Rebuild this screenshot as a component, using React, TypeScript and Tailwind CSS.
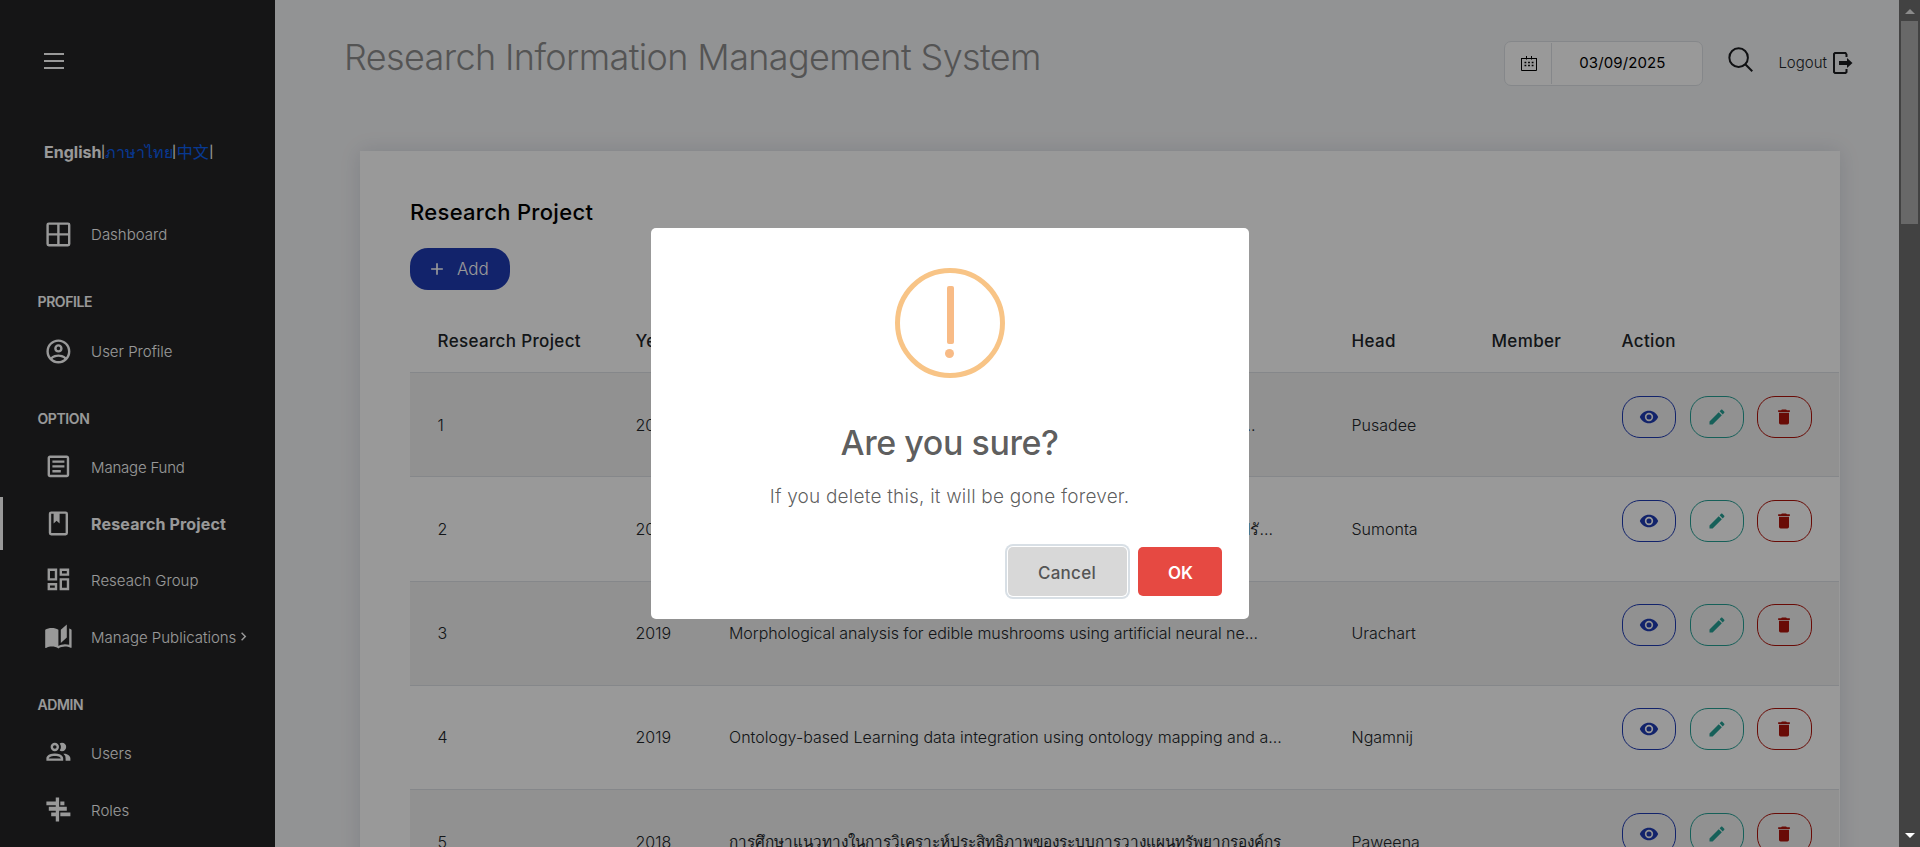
import React from "react";

const latin = "font-['Inter','Noto_Sans_CJK_SC',sans-serif]";

const paths = {
  dashboard:
    "M4,2H20A2,2 0 0,1 22,4V20A2,2 0 0,1 20,22H4A2,2 0 0,1 2,20V4A2,2 0 0,1 4,2M4,4V11H11V4H4M4,20H11V13H4V20M20,20V13H13V20H20M20,4H13V11H20V4Z",
  profile:
    "M12,2A10,10 0 0,0 2,12A10,10 0 0,0 12,22A10,10 0 0,0 22,12A10,10 0 0,0 12,2M7.07,18.28C7.5,17.38 10.12,16.5 12,16.5C13.88,16.5 16.5,17.38 16.93,18.28C15.57,19.36 13.86,20 12,20C10.14,20 8.43,19.36 7.07,18.28M18.36,16.83C16.93,15.09 13.46,14.5 12,14.5C10.54,14.5 7.07,15.09 5.64,16.83C4.62,15.5 4,13.82 4,12C4,7.59 7.59,4 12,4C16.41,4 20,7.59 20,12C20,13.82 19.38,15.5 18.36,16.83M12,6C10.06,6 8.5,7.56 8.5,9.5C8.5,11.44 10.06,13 12,13C13.94,13 15.5,11.44 15.5,9.5C15.5,7.56 13.94,6 12,6M12,11A1.5,1.5 0 0,1 10.5,9.5A1.5,1.5 0 0,1 12,8A1.5,1.5 0 0,1 13.5,9.5A1.5,1.5 0 0,1 12,11Z",
  fund: "M5,3C3.89,3 3,3.89 3,5V19C3,20.11 3.89,21 5,21H19C20.11,21 21,20.11 21,19V5C21,3.89 20.11,3 19,3H5M5,5H19V19H5V5M7,7V9H17V7H7M7,11V13H17V11H7M7,15V17H14V15H7Z",
  project:
    "M18,2A2,2 0 0,1 20,4V20A2,2 0 0,1 18,22H6A2,2 0 0,1 4,20V4A2,2 0 0,1 6,2H18M18,4H13V12L10.5,9.75L8,12V4H6V20H18V4Z",
  group:
    "M19,5V7H15V5H19M9,5V11H5V5H9M19,13V19H15V13H19M9,17V19H5V17H9M21,3H13V9H21V3M11,3H3V13H11V3M21,11H13V21H21V11M11,15H3V21H11V15Z",
  publications:
    "M19 2L14 6.5V17.5L19 13V2M6.5 5C4.55 5 2.45 5.4 1 6.5V21.16C1 21.41 1.25 21.66 1.5 21.66C1.6 21.66 1.65 21.59 1.75 21.59C3.1 20.94 5.05 20.5 6.5 20.5C8.45 20.5 10.55 20.9 12 22C13.35 21.15 15.8 20.5 17.5 20.5C19.15 20.5 20.85 20.81 22.25 21.56C22.35 21.61 22.4 21.59 22.5 21.59C22.75 21.59 23 21.34 23 21.09V6.5C22.4 6.05 21.75 5.75 21 5.5V19C19.9 18.65 18.7 18.5 17.5 18.5C15.8 18.5 13.35 19.15 12 20V6.5C10.55 5.4 8.45 5 6.5 5Z",
  users:
    "M13.07 10.41A5 5 0 0 0 13.07 4.59A3.39 3.39 0 0 1 15 4A3.5 3.5 0 0 1 15 11A3.39 3.39 0 0 1 13.07 10.41M5.5 7.5A3.5 3.5 0 1 1 9 11A3.5 3.5 0 0 1 5.5 7.5M7.5 7.5A1.5 1.5 0 1 0 9 6A1.5 1.5 0 0 0 7.5 7.5M16 17V19H2V17S2 13 9 13 16 17 16 17M14 17C13.86 16.22 12.67 15 9 15S4.07 16.31 4 17M15.95 13A5.32 5.32 0 0 1 18 17V19H22V17S22 13.37 15.94 13Z",
  roles: "M9.8 2H12.6V22H9.8V17.7H6V14.5H9.8V13.1H4V9.8H9.8V8.6H2V5.4H9.8ZM13.6 5.4H17V8.6H13.6ZM12.6 9.8H19V13.1H12.6ZM13.6 14.5H22V17.7H13.6Z",
  chevron: "M8.59,16.58L13.17,12L8.59,7.41L10,6L16,12L10,18L8.59,16.58Z",
  eye: "M12,9A3,3 0 0,0 9,12A3,3 0 0,0 12,15A3,3 0 0,0 15,12A3,3 0 0,0 12,9M12,17A5,5 0 0,1 7,12A5,5 0 0,1 12,7A5,5 0 0,1 17,12A5,5 0 0,1 12,17M12,4.5C7,4.5 2.73,7.61 1,12C2.73,16.39 7,19.5 12,19.5C17,19.5 21.27,16.39 23,12C21.27,7.61 17,4.5 12,4.5Z",
  pencil:
    "M20.71,7.04C21.1,6.65 21.1,6 20.71,5.63L18.37,3.29C18,2.9 17.35,2.9 16.96,3.29L15.12,5.12L18.87,8.87M3,17.25V21H6.75L17.81,9.93L14.06,6.18L3,17.25Z",
  trash: "M19,4H15.5L14.5,3H9.5L8.5,4H5V6H19M6,19A2,2 0 0,0 8,21H16A2,2 0 0,0 18,19V7H6V19Z",
  plus: "M19,13H13V19H11V13H5V11H11V5H13V11H19V13Z",
};

function Icon({ name, className }: { name: keyof typeof paths; className: string }) {
  return (
    <svg viewBox="0 0 24 24" fill="currentColor" className={className}>
      <path d={paths[name]} />
    </svg>
  );
}

type NavProps = { icon: keyof typeof paths; label: string; track?: string; active?: boolean; arrow?: boolean };

function NavItem({ icon, label, track = "", active, arrow }: NavProps) {
  return (
    <div
      className={`mb-[3.700px] flex h-[53px] items-center border-l-[3px] pl-[40.500px] ${
        active ? "border-white" : "border-transparent"
      }`}
    >
      <Icon name={icon} className="-mt-px size-[28.8px] shrink-0" />
      <span
        className={`ml-[18.800px] whitespace-nowrap ${track} ${
          active ? "mt-px text-[16px] font-bold" : "mt-[2px] text-[15px] font-light"
        }`}
      >
        {label}
      </span>
      {arrow && <Icon name="chevron" className="-ml-px size-[17px]" />}
    </div>
  );
}

function NavHeading({ children }: { children: React.ReactNode }) {
  return (
    <div className="flex h-[20px] items-center pl-[37.500px] text-[14px] font-semibold tracking-[-0.4px]">
      {children}
    </div>
  );
}

function Bar() {
  return <span className="mx-[-0.500px] text-[12px] font-medium">|</span>;
}

function Sidebar() {
  return (
    <aside className="flex h-full w-[275px] shrink-0 flex-col bg-[#232426] text-white">
      <div className="mt-[53px] ml-[44px] flex h-[16px] w-[20px] flex-col justify-between">
        <i className="h-[2px] bg-white" />
        <i className="h-[2px] bg-white" />
        <i className="h-[2px] bg-white" />
      </div>
      <div className="mt-[71px] ml-[44px] flex h-[24px] items-center text-[16px] whitespace-nowrap">
        <b className="font-bold">English</b>
        <Bar />
        <span className="text-[16px] text-[#0d5ff2]">ภาษาไทย</span>
        <Bar />
        <span className="mx-px text-[16px] text-[#0d5ff2]">中文</span>
        <Bar />
      </div>
      <div className="mt-[44px]">
        <NavItem icon="dashboard" label="Dashboard" />
      </div>
      <div className="mt-[27px] mb-[13.300px]">
        <NavHeading>PROFILE</NavHeading>
      </div>
      <NavItem icon="profile" label="User Profile" />
      <div className="mt-[27px] mb-[11.700px]">
        <NavHeading>OPTION</NavHeading>
      </div>
      <NavItem icon="fund" label="Manage Fund" track="tracking-[-0.2px]" />
      <NavItem icon="project" label="Research Project" track="tracking-[0.15px]" active />
      <NavItem icon="group" label="Reseach Group" />
      <NavItem icon="publications" label="Manage Publications" arrow />
      <div className="mt-[27px] mb-[12.500px]">
        <NavHeading>ADMIN</NavHeading>
      </div>
      <NavItem icon="users" label="Users" />
      <NavItem icon="roles" label="Roles" />
    </aside>
  );
}

function Header() {
  return (
    <header className="flex h-[151px] items-start">
      <h1 className="mt-[33px] ml-[69px] text-[36px] leading-[48px] font-light tracking-[-0.62px] whitespace-nowrap text-[#8d8d8d]">
        Research Information Management System
      </h1>
      <div className="mt-[41px] ml-auto flex h-[45px] w-[199px] items-center rounded-[7px] border border-[#dee2e6] bg-white">
        <div className="flex h-[41px] w-[47px] items-center justify-center border-r border-[#dee2e6]">
          <svg viewBox="0 0 16 16" className="ml-[2px] size-[16px]" fill="none" stroke="black">
            <path d="M.5 2V14.5H15.5V2M.5 2.5H15.5M5.5 0V3.5M10.5 0V3.5" />
            <path d="M3.500 6.5H13M3.500 9.5H13" strokeWidth="1.4" strokeDasharray="1.8 1.8" />
          </svg>
        </div>
        <span className="flex-1 pr-[10px] text-center text-[15px] font-normal tracking-[0.1px] text-black">03/09/2025</span>
      </div>
      <svg viewBox="0 0 24 24" className="mt-[47px] ml-[25px] size-[25px]" fill="none" stroke="#1b1d20" strokeWidth="1.9">
        <circle cx="10.2" cy="10.2" r="8.9" />
        <path d="M16.6 16.6L23.3 23.3" />
      </svg>
      <span className="mt-[51px] ml-[25px] text-[15px] leading-[24px] font-light text-[#212529]">Logout</span>
      <svg viewBox="0 0 20 22" className="mt-[52px] mr-[46px] ml-[6px] h-[22px] w-[20px]" fill="none" stroke="#1b1d20" strokeWidth="2">
        <path d="M13.5 5V2.5L12.500 1H2L1 2V20L2 21H12.5L13.500 20V17" />
        <path d="M6 11H15" strokeWidth="4" />
        <path d="M14 6L19.500 11L14 16Z" fill="#1b1d20" stroke="none" />
      </svg>
    </header>
  );
}

const rows = [
  { n: "1", year: "2020", title: "Development of a smart farming system...", track: "w-[526.500px] text-right", head: "Pusadee" },
  { n: "2", year: "2020", title: "การพัฒนาระบบสารสนเทศเพื่อการจัดการข้อมูลงานวิจัยปรั...", track: "w-[544px] text-right", head: "Sumonta" },
  { n: "3", year: "2019", title: "Morphological analysis for edible mushrooms using artificial neural ne...", track: "tracking-[-0.05px]", head: "Urachart" },
  { n: "4", year: "2019", title: "Ontology-based Learning data integration using ontology mapping and a...", track: "tracking-[0.010px]", head: "Ngamnij" },
  { n: "5", year: "2018", title: "การศึกษาแนวทางในการวิเคราะห์ประสิทธิภาพของระบบการวางแผนทรัพยากรองค์กร", track: "pt-[2px] text-[15.300px]", head: "Paweena" },
];

const grid = "grid grid-cols-[198px_93.500px_622.500px_140px_130px_246px] pl-[27.500px]";

function Table() {
  return (
    <div className="mr-px ml-[50px] overflow-hidden">
      <div
        className={`${grid} mt-[20px] h-[63px] items-center border-b border-[#dee2e6] pt-[2px] text-[17px] font-medium tracking-[0.35px] whitespace-nowrap text-[#212529]`}
      >
        <span>Research Project</span>
        <span>Year</span>
        <span>Project name</span>
        <span>Head</span>
        <span>Member</span>
        <span>Action</span>
      </div>
      {rows.map((r, i) => (
        <div
          key={r.n}
          className={`${grid} h-[104.250px] items-center border-b border-[#dee2e6] text-[16px] font-light whitespace-nowrap text-[#212529] ${
            i % 2 === 0 ? "bg-[#f2f2f2]" : ""
          }`}
        >
          <span>{r.n}</span>
          <span>{r.year}</span>
          <span className={r.track}>{r.title}</span>
          <span>{r.head}</span>
          <span />
          <span className="flex pb-[16px]">
            <b className="flex h-[42px] w-[54px] items-center justify-center rounded-[18px] border border-[#1f3bb3] text-[#1f3bb3]">
              <Icon name="eye" className="size-[20px]" />
            </b>
            <b className="ml-[14px] flex h-[42px] w-[54px] items-center justify-center rounded-[18px] border border-[#26a095] text-[#26a095]">
              <Icon name="pencil" className="size-[20px]" />
            </b>
            <b className="ml-[13px] flex h-[42px] w-[55px] items-center justify-center rounded-[18px] border border-[#b0130a] text-[#b0130a]">
              <Icon name="trash" className="size-[20px]" />
            </b>
          </span>
        </div>
      ))}
    </div>
  );
}

function Modal() {
  return (
    <div className="flex h-[391px] w-[598px] flex-col items-center rounded-[5px] bg-white">
      <div className="mt-[40px] flex h-[110px] w-[110px] shrink-0 flex-col items-center rounded-full border-[5px] border-[#f8c486]">
        <i className="mt-[13px] ml-px h-[58px] w-[7px] rounded-[2px] bg-[#f8bb86]" />
        <i className="mt-[5px] h-[9px] w-[9px] rounded-full bg-[#f8bb86]" />
      </div>
      <div className="mt-[40px] text-[34px] leading-[50px] font-medium tracking-[-0.45px] text-black/65">Are you sure?</div>
      <div className="mt-[15px] text-[19px] leading-[28px] font-light tracking-[0.2px] text-black/65">
        If you delete this, it will be gone forever.
      </div>
      <div className="mt-[36px] mr-[27px] flex gap-[11px] self-end">
        <button className="h-[49px] w-[119px] rounded-[5px] bg-[#d8d8d8] pt-[4px] text-[17px] font-medium tracking-[0.3px] text-[#555] shadow-[0_0_0_1px_#fff,0_0_0_3px_#d8dfe5]">
          Cancel
        </button>
        <button className="h-[49px] w-[84px] rounded-[5px] bg-[#e64942] pt-[4px] pl-[2px] text-[17px] font-semibold text-white">OK</button>
      </div>
    </div>
  );
}

export default function App() {
  return (
    <div className={`flex h-[847px] w-[1920px] overflow-hidden ${latin}`}>
      <div className="relative flex min-w-0 flex-1 overflow-hidden bg-[#f4f5f7]">
        <Sidebar />
        <main className="min-w-0 flex-1">
          <Header />
          <section className="ml-[85px] h-[900px] w-[1480px] bg-white pt-[45px] shadow-[0_0_20px_rgba(8,21,66,0.12)]">
            <h2 className="ml-[50px] text-[22px] leading-[32px] font-medium tracking-[0.3px] text-black">Research Project</h2>
            <button className="mt-[20px] ml-[50px] flex h-[42px] w-[100px] items-center rounded-[18px] bg-[#1f3bb3] pl-[17px] text-[17px] text-white">
              <Icon name="plus" className="size-[20px]" />
              <span className="mt-[2px] ml-[10px] font-light">Add</span>
            </button>
            <Table />
          </section>
        </main>
        <div className="absolute inset-0 flex items-center justify-center bg-black/40">
          <Modal />
        </div>
      </div>
      <div className="flex w-[21px] shrink-0 flex-col items-center bg-[#424242]">
        <i className="mt-[9px] h-0 w-0 border-x-[5px] border-b-[5px] border-x-transparent border-b-[#8b8b8b]" />
        <i className="mt-[7px] h-[203px] w-[17px] bg-[#686868]" />
        <i className="mt-auto mb-[9px] h-0 w-0 border-x-[5px] border-t-[5px] border-x-transparent border-t-white" />
      </div>
    </div>
  );
}
